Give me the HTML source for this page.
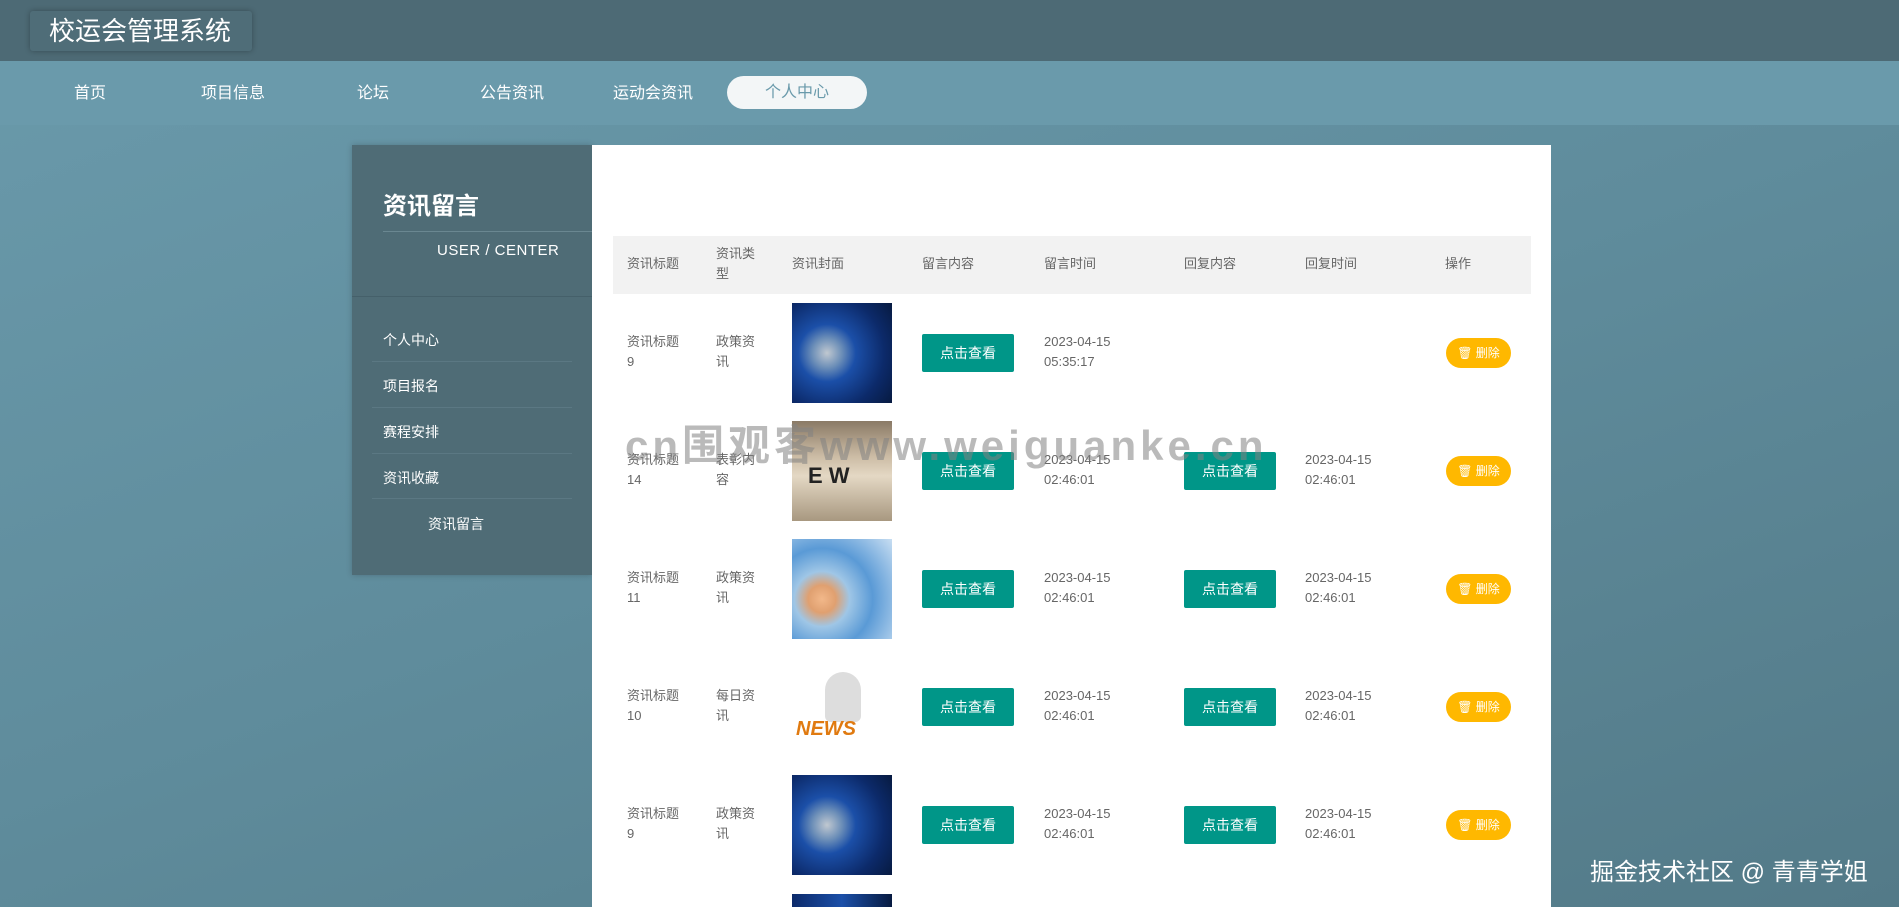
<!DOCTYPE html>
<html><head><meta charset="utf-8"><style>
*{margin:0;padding:0;box-sizing:border-box}
body{width:1899px;height:907px;overflow:hidden;position:relative;font-family:"Liberation Sans","Noto Sans CJK SC",sans-serif;background:linear-gradient(160deg,#6a9aab 0%,#5f8c9c 50%,#537a88 100%)}
.a{position:absolute}
.hd{left:0;top:0;width:1899px;height:61px;background:#4d6a75;box-shadow:0 2px 6px rgba(0,0,0,.2)}
.tt{left:30px;top:11px;width:222px;height:40px;background:#4f6d78;box-shadow:0 0 6px rgba(0,0,0,.3);color:#fff;font-size:26px;line-height:40px;padding-left:19px;border-radius:3px}
.nav{left:0;top:61px;width:1899px;height:64px;background:#6a9aab}
.ni{color:#fff;font-size:16px;top:79px;transform:translateX(-50%);white-space:nowrap}
.pill{left:727px;top:76px;width:140px;height:33px;background:#f3f6f7;border-radius:17px;color:#6a9aab;text-align:center;line-height:33px;font-size:16px}
.side{left:352px;top:145px;width:240px;height:430px;background:#4f6c76;box-shadow:0 0 6px rgba(0,0,0,.2)}
.main{left:592px;top:145px;width:959px;height:762px;background:#fff}
.th{left:613px;top:236px;width:918px;height:58px;background:#f2f2f2}
.c{font-size:13px;color:#666;line-height:20px}
.btn{width:92px;height:38px;background:#009688;color:#fff;font-size:14px;text-align:center;line-height:38px;border-radius:2px}
.del{width:65px;height:30px;background:#ffb800;color:#fff;font-size:12px;text-align:center;line-height:30px;border-radius:15px}
.sm{color:#fff;font-size:14px;left:383px}
.sep{left:372px;width:200px;height:1px;background:#5b7883}
</style></head><body>
<div class="a hd"></div>
<div class="a tt">校运会管理系统</div>
<div class="a nav"></div>
<div class="a ni" style="left:90px">首页</div>
<div class="a ni" style="left:233px">项目信息</div>
<div class="a ni" style="left:373px">论坛</div>
<div class="a ni" style="left:512px">公告资讯</div>
<div class="a ni" style="left:653px">运动会资讯</div>
<div class="a pill">个人中心</div>

<div class="a side"></div>
<div class="a" style="left:383px;top:186px;color:#fff;font-size:24px;font-weight:bold">资讯留言</div>
<div class="a" style="left:383px;top:231px;width:209px;height:1px;background:#6a8791"></div>
<div class="a" style="left:437px;top:242px;color:#fff;font-size:15px;letter-spacing:0.5px">USER / CENTER</div>
<div class="a" style="left:352px;top:296px;width:240px;height:1px;background:#45606a"></div>
<div class="a sm" style="top:330px">个人中心</div>
<div class="a sep" style="top:361px"></div>
<div class="a sm" style="top:376px">项目报名</div>
<div class="a sep" style="top:407px"></div>
<div class="a sm" style="top:422px">赛程安排</div>
<div class="a sep" style="top:453px"></div>
<div class="a sm" style="top:468px">资讯收藏</div>
<div class="a sep" style="top:498px"></div>
<div class="a sm" style="top:514px;left:428px">资讯留言</div>

<div class="a main"></div>
<div class="a th"></div>
<div class="a c" style="left:627px;top:254px">资讯标题</div>
<div class="a c" style="left:716px;top:244px;width:50px">资讯类<br>型</div>
<div class="a c" style="left:792px;top:254px">资讯封面</div>
<div class="a c" style="left:922px;top:254px">留言内容</div>
<div class="a c" style="left:1044px;top:254px">留言时间</div>
<div class="a c" style="left:1184px;top:254px">回复内容</div>
<div class="a c" style="left:1305px;top:254px">回复时间</div>
<div class="a c" style="left:1445px;top:254px">操作</div>

<div class="a c" style="left:627px;top:332px">资讯标题<br>9</div>
<div class="a c" style="left:716px;top:332px">政策资<br>讯</div>
<div class="a" style="left:792px;top:303px;width:100px;height:100px;background:radial-gradient(circle at 35% 50%,#c0c8d0 0,#6d8fb8 18%,#1b4fa8 35%,#0c2a6a 70%,#071a40 100%)"></div>
<div class="a btn" style="left:922px;top:334px">点击查看</div>
<div class="a c" style="left:1044px;top:332px">2023-04-15<br>05:35:17</div>
<div class="a del" style="left:1446px;top:338px">🗑 删除</div>

<div class="a c" style="left:627px;top:450px">资讯标题<br>14</div>
<div class="a c" style="left:716px;top:450px">表彰内<br>容</div>
<div class="a" style="left:792px;top:421px;width:100px;height:100px;background:linear-gradient(180deg,#8a7a66 0,#cbbba4 35%,#e4d8c4 55%,#a89880 100%)"></div>
<div class="a" style="left:808px;top:463px;font-size:22px;font-weight:bold;color:#222">E W</div>
<div class="a btn" style="left:922px;top:452px">点击查看</div>
<div class="a c" style="left:1044px;top:450px">2023-04-15<br>02:46:01</div>
<div class="a btn" style="left:1184px;top:452px">点击查看</div>
<div class="a c" style="left:1305px;top:450px">2023-04-15<br>02:46:01</div>
<div class="a del" style="left:1446px;top:456px">🗑 删除</div>

<div class="a c" style="left:627px;top:568px">资讯标题<br>11</div>
<div class="a c" style="left:716px;top:568px">政策资<br>讯</div>
<div class="a" style="left:792px;top:539px;width:100px;height:100px;background:radial-gradient(circle at 30% 60%,#f2b88a 0,#e0a070 15%,#9fc6e6 30%,#5a9ad6 55%,#c8def2 100%)"></div>
<div class="a btn" style="left:922px;top:570px">点击查看</div>
<div class="a c" style="left:1044px;top:568px">2023-04-15<br>02:46:01</div>
<div class="a btn" style="left:1184px;top:570px">点击查看</div>
<div class="a c" style="left:1305px;top:568px">2023-04-15<br>02:46:01</div>
<div class="a del" style="left:1446px;top:574px">🗑 删除</div>

<div class="a c" style="left:627px;top:686px">资讯标题<br>10</div>
<div class="a c" style="left:716px;top:686px">每日资<br>讯</div>
<div class="a" style="left:792px;top:657px;width:100px;height:100px;background:#fff"></div>
<div class="a" style="left:825px;top:672px;width:36px;height:50px;border-radius:18px 18px 6px 6px;background:#ddd"></div>
<div class="a" style="left:796px;top:718px;font-size:20px;font-weight:bold;color:#e07a10;font-style:italic">NEWS</div>
<div class="a btn" style="left:922px;top:688px">点击查看</div>
<div class="a c" style="left:1044px;top:686px">2023-04-15<br>02:46:01</div>
<div class="a btn" style="left:1184px;top:688px">点击查看</div>
<div class="a c" style="left:1305px;top:686px">2023-04-15<br>02:46:01</div>
<div class="a del" style="left:1446px;top:692px">🗑 删除</div>

<div class="a c" style="left:627px;top:804px">资讯标题<br>9</div>
<div class="a c" style="left:716px;top:804px">政策资<br>讯</div>
<div class="a" style="left:792px;top:775px;width:100px;height:100px;background:radial-gradient(circle at 35% 50%,#c0c8d0 0,#6d8fb8 18%,#1b4fa8 35%,#0c2a6a 70%,#071a40 100%)"></div>
<div class="a btn" style="left:922px;top:806px">点击查看</div>
<div class="a c" style="left:1044px;top:804px">2023-04-15<br>02:46:01</div>
<div class="a btn" style="left:1184px;top:806px">点击查看</div>
<div class="a c" style="left:1305px;top:804px">2023-04-15<br>02:46:01</div>
<div class="a del" style="left:1446px;top:810px">🗑 删除</div>

<div class="a" style="left:792px;top:894px;width:100px;height:13px;background:linear-gradient(90deg,#0c2a6a,#1b4fa8,#071a40)"></div>

<div class="a" style="left:625px;top:412px;font-size:42px;font-weight:bold;color:rgba(130,130,130,.55);white-space:nowrap;letter-spacing:4px">cn围观客www.weiguanke.cn</div>
<div class="a" style="left:1590px;top:852px;font-size:24px;color:#fff;white-space:nowrap">掘金技术社区 @ 青青学姐</div>
</body></html>
